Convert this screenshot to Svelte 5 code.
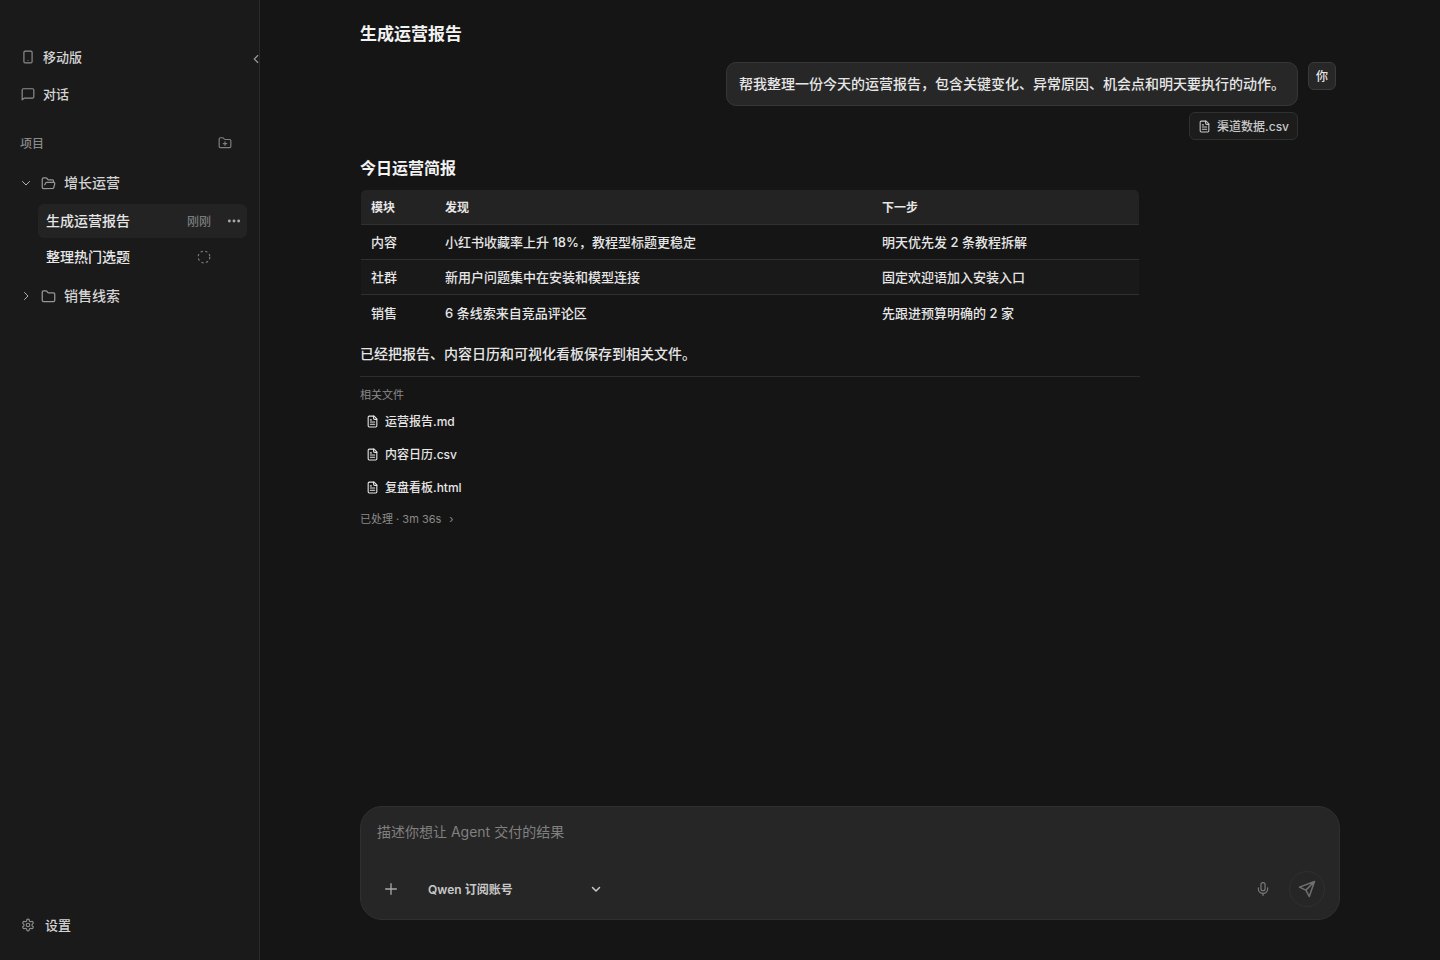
<script lang="ts">
	type Task = { id: string; name: string; time?: string; running?: boolean };
	type Project = { id: string; name: string; tasks: Task[] };

	const projects: Project[] = [
		{
			id: 'growth',
			name: '增长运营',
			tasks: [
				{ id: 'report', name: '生成运营报告', time: '刚刚' },
				{ id: 'topics', name: '整理热门选题', running: true }
			]
		},
		{ id: 'sales', name: '销售线索', tasks: [] }
	];

	const rows = [
		['内容', '小红书收藏率上升 18%，教程型标题更稳定', '明天优先发 2 条教程拆解'],
		['社群', '新用户问题集中在安装和模型连接', '固定欢迎语加入安装入口'],
		['销售', '6 条线索来自竞品评论区', '先跟进预算明确的 2 家']
	];

	const files = ['运营报告.md', '内容日历.csv', '复盘看板.html'];

	let openProjects = $state<Record<string, boolean>>({ growth: true });
	let activeTask = $state('report');
	let prompt = $state('');
	let model = $state('qwen');

	function toggleProject(id: string) {
		openProjects[id] = !openProjects[id];
	}
</script>

<svelte:head>
	<title>生成运营报告</title>
</svelte:head>

{#snippet fileIcon()}
	<svg class="icon file" viewBox="0 0 24 24" aria-hidden="true">
		<path d="M15 2H6a2 2 0 0 0-2 2v16a2 2 0 0 0 2 2h12a2 2 0 0 0 2-2V7z" />
		<path d="M14 2v4a2 2 0 0 0 2 2h4M10 9H8M16 13H8M16 17H8" />
	</svg>
{/snippet}

<div class="app">
	<aside class="sidebar">
		<button class="collapse" aria-label="收起侧栏">
			<svg class="icon" viewBox="0 0 24 24"><path d="m15 18-6-6 6-6" /></svg>
		</button>

		<nav class="nav">
			<button class="nav-item">
				<svg class="icon" viewBox="0 0 24 24">
					<rect x="5" y="2" width="14" height="20" rx="2" />
					<path d="M12 18h.01" />
				</svg>
				移动版
			</button>
			<button class="nav-item">
				<svg class="icon" viewBox="0 0 24 24">
					<path d="M22 17a2 2 0 0 1-2 2H6l-4 3V5a2 2 0 0 1 2-2h16a2 2 0 0 1 2 2z" />
				</svg>
				对话
			</button>
		</nav>

		<div class="section-head">
			<h2>项目</h2>
			<button class="icon-btn" aria-label="新建项目">
				<svg class="icon" viewBox="0 0 24 24">
					<path d="M12 10v6M9 13h6" />
					<path d="M20 20a2 2 0 0 0 2-2V8a2 2 0 0 0-2-2h-7.900a2 2 0 0 1-1.690-.900L9.600 3.900A2 2 0 0 0 7.930 3H4a2 2 0 0 0-2 2v13a2 2 0 0 0 2 2Z" />
				</svg>
			</button>
		</div>

		<div class="tree">
			{#each projects as project (project.id)}
				<div class="project">
					<button
						class="project-row"
						aria-expanded={!!openProjects[project.id]}
						onclick={() => toggleProject(project.id)}
					>
						{#if openProjects[project.id]}
							<svg class="icon chevron" viewBox="0 0 24 24"><path d="m5 9 7 7 7-7" /></svg>
							<svg class="icon folder" viewBox="0 0 24 24">
								<path d="m6 14 1.500-2.900A2 2 0 0 1 9.240 10H20a2 2 0 0 1 1.940 2.500l-1.540 6a2 2 0 0 1-1.950 1.500H4a2 2 0 0 1-2-2V5a2 2 0 0 1 2-2h3.900a2 2 0 0 1 1.690.900l.810 1.200a2 2 0 0 0 1.670.900H18a2 2 0 0 1 2 2v2" />
							</svg>
						{:else}
							<svg class="icon chevron" viewBox="0 0 24 24"><path d="m9 19 7-7-7-7" /></svg>
							<svg class="icon folder" viewBox="0 0 24 24">
								<path d="M20 20a2 2 0 0 0 2-2V8a2 2 0 0 0-2-2h-7.900a2 2 0 0 1-1.690-.900L9.600 3.900A2 2 0 0 0 7.930 3H4a2 2 0 0 0-2 2v13a2 2 0 0 0 2 2Z" />
							</svg>
						{/if}
						{project.name}
					</button>

					{#if openProjects[project.id] && project.tasks.length}
						<ul class="tasks">
							{#each project.tasks as task (task.id)}
								<li class="task" class:active={task.id === activeTask}>
									<button class="task-name" onclick={() => (activeTask = task.id)}>{task.name}</button>
									{#if task.time}
										<span class="time">{task.time}</span>
									{/if}
									{#if task.running}
										<svg class="icon spinner" viewBox="0 0 24 24" aria-label="运行中">
											<circle cx="12" cy="12" r="10" />
										</svg>
									{/if}
									{#if task.id === activeTask}
										<button class="more" aria-label="更多">
											<svg class="icon" viewBox="0 0 24 24">
												<circle cx="4" cy="12" r="2.500" />
												<circle cx="12" cy="12" r="2.500" />
												<circle cx="20" cy="12" r="2.500" />
											</svg>
										</button>
									{/if}
								</li>
							{/each}
						</ul>
					{/if}
				</div>
			{/each}
		</div>

		<button class="nav-item settings">
			<svg class="icon" viewBox="0 0 24 24">
				<path d="M12.220 2h-.440a2 2 0 0 0-2 2v.180a2 2 0 0 1-1 1.730l-.430.250a2 2 0 0 1-2 0l-.150-.080a2 2 0 0 0-2.730.730l-.220.380a2 2 0 0 0 .730 2.730l.150.100a2 2 0 0 1 1 1.720v.510a2 2 0 0 1-1 1.740l-.150.090a2 2 0 0 0-.730 2.730l.220.380a2 2 0 0 0 2.730.730l.150-.080a2 2 0 0 1 2 0l.430.250a2 2 0 0 1 1 1.730V20a2 2 0 0 0 2 2h.440a2 2 0 0 0 2-2v-.180a2 2 0 0 1 1-1.730l.430-.250a2 2 0 0 1 2 0l.150.080a2 2 0 0 0 2.730-.730l.220-.390a2 2 0 0 0-.730-2.730l-.150-.080a2 2 0 0 1-1-1.740v-.500a2 2 0 0 1 1-1.740l.150-.090a2 2 0 0 0 .730-2.730l-.220-.380a2 2 0 0 0-2.730-.730l-.150.080a2 2 0 0 1-2 0l-.430-.250a2 2 0 0 1-1-1.730V4a2 2 0 0 0-2-2z" />
				<circle cx="12" cy="12" r="3" />
			</svg>
			设置
		</button>
	</aside>

	<main class="main">
		<div class="thread">
			<h1>生成运营报告</h1>

			<div class="user-message">
				<div class="user-body">
					<p class="bubble">帮我整理一份今天的运营报告，包含关键变化、异常原因、机会点和明天要执行的动作。</p>
					<button class="attachment">
						{@render fileIcon()}
						渠道数据.csv
					</button>
				</div>
				<span class="avatar">你</span>
			</div>

			<article class="answer">
				<h2>今日运营简报</h2>
				<table>
					<thead>
						<tr>
							<th class="col-module">模块</th>
							<th>发现</th>
							<th class="col-next">下一步</th>
						</tr>
					</thead>
					<tbody>
						{#each rows as row}
							<tr>
								{#each row as cell}
									<td>{cell}</td>
								{/each}
							</tr>
						{/each}
					</tbody>
				</table>
				<p>已经把报告、内容日历和可视化看板保存到相关文件。</p>

				<section class="files">
					<h3>相关文件</h3>
					<ul>
						{#each files as file}
							<li>
								<button class="file-link">
									{@render fileIcon()}
									{file}
								</button>
							</li>
						{/each}
					</ul>
				</section>

				<button class="processed">已处理 · 3m 36s <span>›</span></button>
			</article>
		</div>

		<form class="composer" onsubmit={(e) => e.preventDefault()}>
			<textarea bind:value={prompt} rows="1" aria-label="任务描述" placeholder="描述你想让 Agent 交付的结果"></textarea>
			<div class="toolbar">
				<button type="button" class="tool" aria-label="添加">
					<svg class="icon plus" viewBox="0 0 24 24"><path d="M4 12h16M12 4v16" /></svg>
				</button>
				<div class="model">
					<select bind:value={model} aria-label="模型">
						<option value="qwen">Qwen 订阅账号</option>
					</select>
					<svg class="icon" viewBox="0 0 24 24"><path d="m5 9 7 7 7-7" /></svg>
				</div>
				<button type="button" class="tool mic" aria-label="语音输入">
					<svg class="icon" viewBox="0 0 24 24">
						<rect x="8.500" y="1" width="7" height="14" rx="3.500" />
						<path d="M4 10v1.500a8 8 0 0 0 16 0V10M12 19.500V23" />
					</svg>
				</button>
				<button type="submit" class="send" aria-label="发送" disabled={!prompt.trim()}>
					<svg class="icon" viewBox="0 0 24 24">
						<path d="M22 2 2 9.500l8.500 4L15 22ZM22 2 10.500 13.500" />
					</svg>
				</button>
			</div>
		</form>
	</main>
</div>

<style>
	:global(body) {
		background: #151515;
	}

	.app {
		display: flex;
		min-height: 100vh;
		color: #e6e6e6;
		font-family: Inter, 'Noto Sans CJK SC', sans-serif;
		font-size: 14px;
		font-weight: 500;
		line-height: 22px;
	}

	.app * {
		box-sizing: border-box;
	}

	h1,
	h2,
	h3,
	p,
	ul {
		margin: 0;
		padding: 0;
	}

	ul {
		list-style: none;
	}

	button,
	select,
	textarea {
		margin: 0;
		padding: 0;
		border: 0;
		background: transparent;
		color: inherit;
		font: inherit;
	}

	button {
		display: flex;
		align-items: center;
		cursor: pointer;
	}

	.icon {
		flex: none;
		width: 14px;
		height: 14px;
		fill: none;
		stroke: currentColor;
		stroke-width: 2;
		stroke-linecap: round;
		stroke-linejoin: round;
	}

	/* Sidebar */
	.sidebar {
		position: sticky;
		top: 0;
		display: flex;
		flex-direction: column;
		flex: none;
		width: 260px;
		height: 100vh;
		padding: 40px 12px 18px;
		background: #1a1a1a;
		border-right: 1px solid #2a2a2a;
	}

	.collapse {
		position: absolute;
		top: 48px;
		right: -4px;
		height: 22px;
		color: #9a9a9a;
	}

	.nav {
		display: flex;
		flex-direction: column;
		gap: 3px;
	}

	.nav-item {
		gap: 8px;
		height: 34px;
		padding: 0 9px;
		border-radius: 6px;
		color: #d4d4d4;
		font-size: 13px;
	}

	.nav-item .icon {
		color: #8e8e8e;
	}

	.section-head {
		display: flex;
		align-items: center;
		justify-content: space-between;
		height: 28px;
		margin-top: 18px;
		padding: 0 8px;
	}

	.section-head h2 {
		color: #8a8a8a;
		font-size: 12px;
		font-weight: 500;
		line-height: 23px;
	}

	.icon-btn {
		padding: 7px;
		color: #808080;
	}

	.tree {
		display: flex;
		flex: 1;
		flex-direction: column;
		gap: 5px;
		margin-top: 9px;
	}

	.project-row {
		width: 100%;
		height: 34px;
		padding: 0 8px;
		color: #d4d4d4;
	}

	.chevron {
		width: 12px;
		height: 12px;
		margin-right: 9px;
		color: #b4b4b4;
	}

	.folder {
		width: 15px;
		height: 15px;
		margin-right: 8px;
		color: #969696;
	}

	.tasks {
		display: flex;
		flex-direction: column;
		gap: 2px;
		margin-top: 4px;
		padding-left: 26px;
	}

	.task {
		display: flex;
		align-items: center;
		height: 34px;
		padding: 0 36px 0 8px;
		border-radius: 6px;
	}

	.task.active {
		padding-right: 6px;
		background: #232323;
	}

	.task-name {
		flex: 1;
	}

	.time {
		color: #8a8a8a;
		font-size: 12px;
		font-weight: 400;
		line-height: 23px;
	}

	.more {
		margin-left: 16px;
	}

	.more .icon {
		fill: #a8a8a8;
		stroke: none;
	}

	.spinner {
		color: #7c7c7c;
		stroke-dasharray: 4 4;
		stroke-linecap: butt;
	}

	.settings {
		padding: 0 9px;
		gap: 10px;
	}

	/* Conversation */
	.main {
		display: flex;
		flex: 1;
		flex-direction: column;
		justify-content: space-between;
		align-items: center;
		gap: 32px;
		min-width: 0;
		padding: 22px 24px 40px;
	}

	.thread {
		width: 100%;
		max-width: 980px;
	}

	h1 {
		font-size: 17px;
		font-weight: 700;
		line-height: 24px;
		color: #f2f2f2;
	}

	.user-message {
		display: flex;
		justify-content: flex-end;
		gap: 10px;
		margin-top: 16px;
		padding-right: 4px;
	}

	.user-body {
		display: flex;
		flex-direction: column;
		align-items: flex-end;
		gap: 6px;
	}

	.bubble {
		padding: 10px 12px;
		background: #272727;
		border: 1px solid #363636;
		border-radius: 10px;
	}

	.attachment {
		gap: 6px;
		height: 28px;
		padding: 0 8px;
		background: #1c1c1c;
		border: 1px solid #303030;
		border-radius: 6px;
		color: #c8c8c8;
		font-size: 12px;
		line-height: 23px;
	}

	.icon.file {
		width: 13px;
		height: 13px;
	}

	.avatar {
		display: flex;
		align-items: center;
		justify-content: center;
		flex: none;
		width: 28px;
		height: 28px;
		background: #272727;
		border: 1px solid #3a3a3a;
		border-radius: 6px;
		font-size: 12px;
		line-height: 23px;
	}

	.answer {
		max-width: 780px;
		margin-top: 16px;
	}

	.answer h2 {
		font-size: 16px;
		font-weight: 700;
		line-height: 24px;
		color: #f2f2f2;
	}

	table {
		width: 100%;
		margin-top: 9px;
		border: 1px solid #151515;
		border-radius: 6px;
		border-spacing: 0;
		overflow: hidden;
		font-size: 13px;
	}

	th,
	td {
		height: 35px;
		padding: 0 10px;
		border-bottom: 1px solid #303030;
		text-align: left;
	}

	th {
		background: #232323;
		font-size: 12px;
		font-weight: 700;
		line-height: 23px;
	}

	tbody tr:nth-child(even) {
		background: #191919;
	}

	tbody tr:last-child td {
		border-bottom: 0;
	}

	.col-module {
		width: 74px;
	}

	.col-next {
		width: 267px;
	}

	.answer p {
		margin-top: 12px;
	}

	.files {
		margin-top: 11px;
		padding-top: 10px;
		border-top: 1px solid #2c2c2c;
	}

	.files h3 {
		color: #8a8a8a;
		font-size: 11px;
		font-weight: 400;
		line-height: 16px;
	}

	.files ul {
		display: flex;
		flex-direction: column;
		gap: 5px;
		margin-top: 4px;
	}

	.file-link {
		gap: 6px;
		height: 28px;
		padding: 0 6px;
		font-size: 12px;
		line-height: 23px;
	}

	.processed {
		gap: 8px;
		margin-top: 7px;
		color: #8a8a8a;
		font-size: 11px;
		font-weight: 400;
	}

	/* Composer */
	.composer {
		display: flex;
		flex-direction: column;
		gap: 28px;
		width: 100%;
		max-width: 980px;
		padding: 14px 14px 12px 16px;
		background: #262626;
		border: 1px solid #303030;
		border-radius: 22px;
	}

	textarea {
		width: 100%;
		resize: none;
		outline: none;
		font-weight: 400;
	}

	textarea::placeholder {
		color: #808080;
	}

	.toolbar {
		display: flex;
		align-items: center;
	}

	.tool {
		justify-content: center;
		width: 28px;
		height: 28px;
		color: #a8a8a8;
	}

	.icon.plus {
		width: 16px;
		height: 16px;
	}

	.model {
		display: flex;
		align-items: center;
		margin-left: 23px;
		margin-right: auto;
	}

	select {
		width: 174px;
		margin-right: -12px;
		appearance: none;
		outline: none;
		color: #c8c8c8;
		font-size: 12px;
		font-weight: 600;
		line-height: 23px;
	}

	.model .icon {
		width: 12px;
		height: 12px;
		color: #c8c8c8;
		stroke-width: 3;
		pointer-events: none;
	}

	.mic {
		margin-right: 12px;
		color: #7a7a7a;
	}

	.send {
		justify-content: center;
		width: 36px;
		height: 36px;
		border: 1px solid #303030;
		border-radius: 50%;
		color: #707070;
	}

	.send .icon {
		width: 18px;
		height: 18px;
	}
</style>
